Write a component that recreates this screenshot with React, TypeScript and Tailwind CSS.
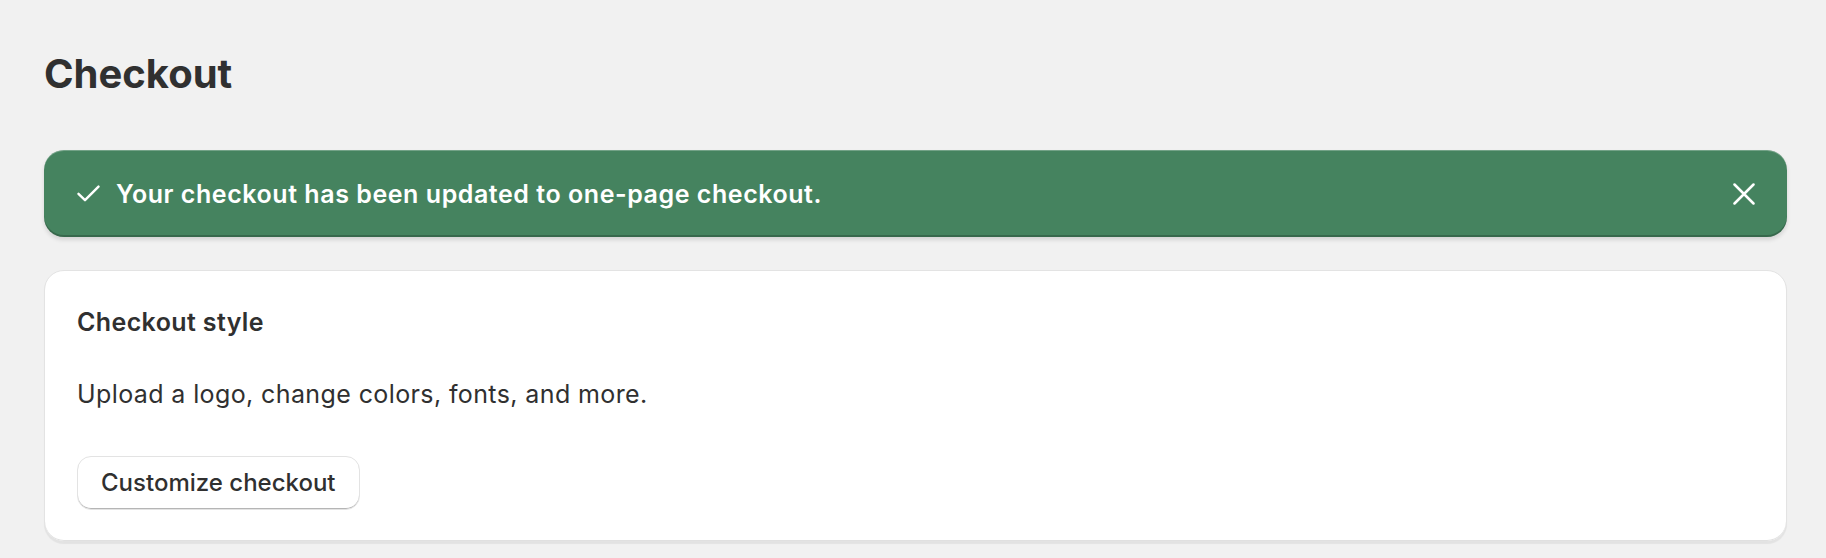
function CheckIcon() {
  return (
    <svg width="23" height="17" viewBox="0 0 23 17" fill="none" className="shrink-0">
      <path
        d="M1.5 8.8 8 15.2 21.5 1.6"
        stroke="currentColor"
        strokeWidth="2.4"
        strokeLinecap="round"
        strokeLinejoin="round"
      />
    </svg>
  );
}

function CloseIcon() {
  return (
    <svg width="22" height="22" viewBox="0 0 22 22" fill="none">
      <path
        d="M1.5 1.5 20.5 20.5M20.5 1.5 1.5 20.5"
        stroke="currentColor"
        strokeWidth="2.5"
        strokeLinecap="round"
      />
    </svg>
  );
}

export default function App() {
  return (
    <div
      className="min-h-screen bg-[#f1f1f1] pl-[44px] pr-[39px] pt-[50px] pb-8 text-[#303030]"
      style={{ fontFamily: "Inter, 'Noto Sans', sans-serif" }}
    >
      <h1 className="text-[40px] font-bold leading-[48px]">Checkout</h1>

      <div className="mt-[52px] flex h-[87px] items-center rounded-[20px] bg-[#45835f] pl-[33px] pr-[32px] text-white shadow-[inset_0_1px_0_rgba(255,255,255,0.25),inset_0_-2px_0_rgba(0,0,0,0.2),0_3px_4px_rgba(0,0,0,0.12)]">
        <CheckIcon />
        <p className="ml-[16px] flex-1 text-[25px] font-semibold leading-[36px] tracking-[0.55px]">
          Your checkout has been updated to one-page checkout.
        </p>
        <button className="flex items-center justify-center">
          <CloseIcon />
        </button>
      </div>

      <div className="mt-[33px] rounded-[20px] border border-[#e3e3e3] bg-white px-[32px] pt-[35px] pb-[31px] shadow-[inset_0_-1px_0_rgba(0,0,0,0.12),0_2px_1px_rgba(0,0,0,0.06)]">
        <h2 className="text-[25px] font-semibold leading-[32px] tracking-[0.38px]">
          Checkout style
        </h2>
        <p className="mt-[38px] text-[25px] leading-[36px] tracking-[0.39px]">
          Upload a logo, change colors, fonts, and more.
        </p>
        <button className="mt-[44px] h-[54px] rounded-[14px] border border-[#e3e3e3] bg-white px-[23px] text-[24px] font-medium leading-[32px] text-[#303030] shadow-[inset_0_-1px_0_#b5b5b5]">
          Customize checkout
        </button>
      </div>
    </div>
  );
}
